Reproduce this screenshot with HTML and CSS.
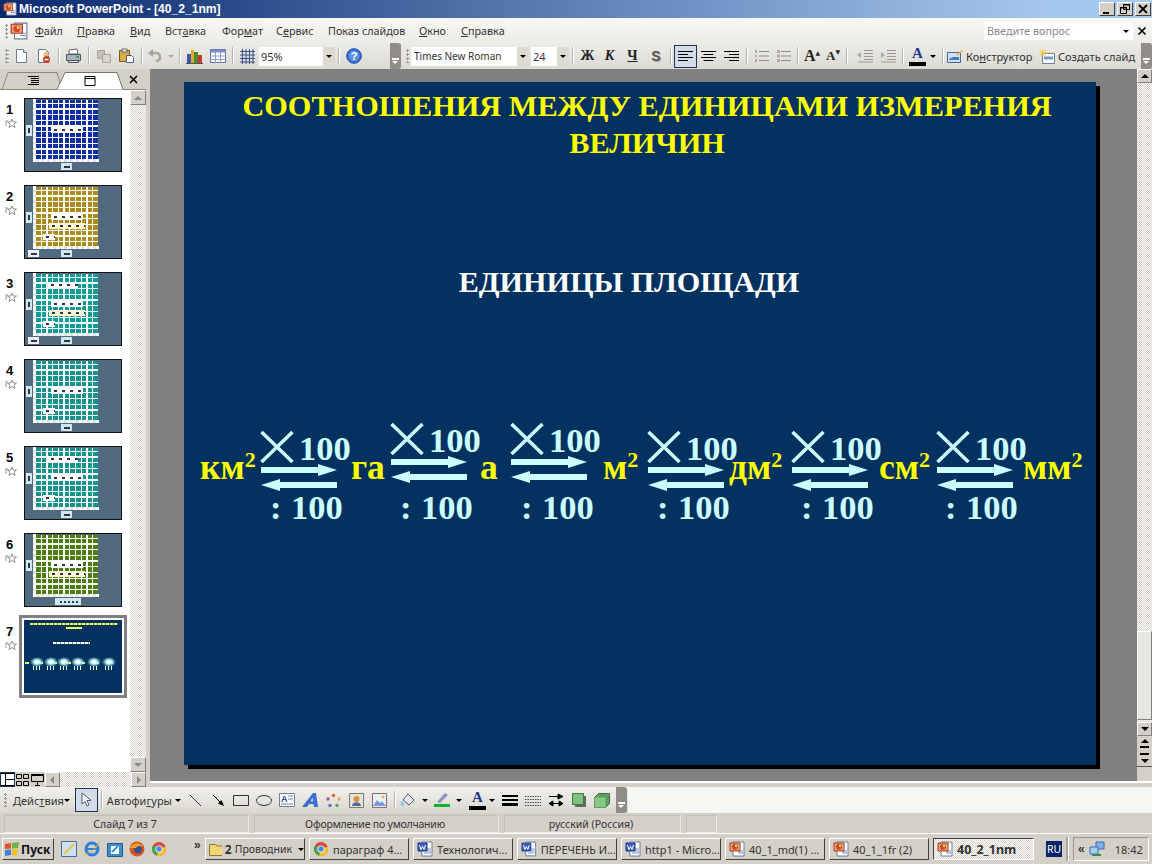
FILE: index.html
```html
<!DOCTYPE html>
<html lang="ru">
<head>
<meta charset="utf-8">
<title>Microsoft PowerPoint - [40_2_1nm]</title>
<link rel="stylesheet" href="styles.css">
</head>
<body>
<svg class="defs" width="0" height="0">
  <defs>
    <symbol id="ppt" viewBox="0 0 16 16">
      <path d="M4 1h11v14H4z" fill="#fff" stroke="#6a7fa0"/>
      <path d="M9 10h5M9 12h5" stroke="#6f86b5"/>
      <path d="M1 2h10v8H1z" fill="#e8a080" stroke="#a04020"/>
      <circle cx="6" cy="6" r="3" fill="#d84a20"/><path d="M6 6V3.5A2.5 2.5 0 0 1 8.5 6z" fill="#f5d070"/>
    </symbol>
    <symbol id="word" viewBox="0 0 16 16">
      <path d="M5 1h10v14H5z" fill="#fff" stroke="#6a7fa0"/>
      <path d="M10 8h4M10 10h4M7 12h7" stroke="#7f93bd"/>
      <path d="M1 2h9v8H1z" fill="#3b5fc0" stroke="#1e3a8a"/>
      <path d="M2.5 4l1.5 4.500 1.500-3 1.500 3 1.500-4.500" fill="none" stroke="#fff"/>
    </symbol>
    <symbol id="chrome" viewBox="0 0 16 16">
      <circle cx="8" cy="8" r="7" fill="#d9463a"/>
      <path d="M8 8L2 4.500A7 7 0 0 0 6 14.700z" fill="#3da84f"/>
      <path d="M8 8l6.500-2.500A7 7 0 0 1 6 14.700z" fill="#f3c22e"/>
      <circle cx="8" cy="8" r="3.600" fill="#fff"/><circle cx="8" cy="8" r="2.700" fill="#4a86e0"/>
    </symbol>
    <symbol id="cross" viewBox="0 0 34 32">
      <path d="M1.500 1l31 30M32.500 1l-31 30" stroke="#ccffff" stroke-width="3.500" fill="none"/>
    </symbol>
    <symbol id="arrowr" viewBox="0 0 76 12">
      <path d="M0 3h57V0l19 6-19 6V9H0z" fill="#ccffff"/>
    </symbol>
    <symbol id="arrowl" viewBox="0 0 76 12">
      <path d="M76 3H19V0L0 6l19 6V9h57z" fill="#ccffff"/>
    </symbol>
    <symbol id="star" viewBox="0 0 12 11">
      <path d="M7 1l1.300 3H11.500L9 6l1 3.500L7 7.500 4 9.500 5 6 2.500 4H5.700z" fill="#fff" stroke="#777" stroke-width=".8"/>
      <path d="M0 3h3M0 5h2M0 7h2" stroke="#777" stroke-width=".8"/>
    </symbol>
  </defs>
</svg>

<header class="titlebar">
  <svg class="ti" width="16" height="14"><use href="#ppt"/></svg>
  <span class="title-text">Microsoft PowerPoint - [40_2_1nm]</span>
  <div class="winbtns">
    <span class="winbtn"><svg width="12" height="12"><path d="M2 9h6v2H2z" fill="#000"/></svg></span>
    <span class="winbtn"><svg width="12" height="12"><path d="M4.500 1.500h6v5h-6zM1.500 4.500h6v6h-6z" fill="#d4d0c8" stroke="#000"/><path d="M4 1h7v1.500H4zM1 4h7v1.500H1z"/></svg></span>
    <span class="winbtn"><svg width="12" height="12"><path d="M2 2l8 8M10 2l-8 8" stroke="#000" stroke-width="1.800"/></svg></span>
  </div>
</header>

<nav class="menubar">
  <span class="grip"></span>
  <svg class="menu-ico" width="18" height="18"><use href="#ppt"/></svg>
  <span class="mi m1"><u>Ф</u>айл</span>
  <span class="mi m2"><u>П</u>равка</span>
  <span class="mi m3"><u>В</u>ид</span>
  <span class="mi m4">Вст<u>а</u>вка</span>
  <span class="mi m5">Фор<u>м</u>ат</span>
  <span class="mi m6">С<u>е</u>рвис</span>
  <span class="mi m7">Показ слайдов</span>
  <span class="mi m8"><u>О</u>кно</span>
  <span class="mi m9"><u>С</u>правка</span>
  <span class="helpbox">Введите вопрос<i class="drop"></i></span>
  <svg class="helpx" width="10" height="10"><path d="M1.500 1.500l7 7M8.500 1.500l-7 7" stroke="#000" stroke-width="1.600"/></svg>
</nav>

<div class="toolbar">
  <span class="grip"></span>
  <span class="tb"><svg width="16" height="16"><path d="M3.500 1.500h7l3 3v10h-10z" fill="#fff" stroke="#6b7a90"/><path d="M10.500 1.500v3h3" fill="#dde" stroke="#6b7a90"/></svg></span>
  <span class="tb"><svg width="16" height="16"><path d="M2.500 1.500h7l3 3v10h-10z" fill="#fff" stroke="#6b7a90"/><path d="M8 5c1-2 3-2 4 0l1 3H7z" fill="#e5c07a"/><circle cx="10.500" cy="11.500" r="3.500" fill="#c83a28"/><path d="M8.500 11.500h4" stroke="#fff" stroke-width="1.500"/></svg></span>
  <span class="sep"></span>
  <span class="tb"><svg width="17" height="16"><path d="M4 2l8-1 1 5H4z" fill="#fff" stroke="#667"/><path d="M1.500 6.500h14v6h-14z" fill="#a9b2bd" stroke="#4a5360"/><path d="M3.500 12.500h10v2h-10z" fill="#dfe3e8" stroke="#4a5360"/><path d="M11 9h3" stroke="#3da84f" stroke-width="2"/></svg></span>
  <span class="sep"></span>
  <span class="tb"><svg width="16" height="16"><path d="M1.500 2.500h7v8h-7z" fill="#c4c1b8" stroke="#a8a59c"/><path d="M6.500 6.500h8v8h-8z" fill="#d9d6cd" stroke="#a8a59c"/></svg></span>
  <span class="tb"><svg width="17" height="16"><path d="M1.500 2.500h10v11h-10z" fill="#d9a94a" stroke="#7a5a20"/><path d="M4 1h5v3H4z" fill="#e8e8ee" stroke="#666"/><path d="M8.500 7.500h5l2 2v5h-7z" fill="#fff" stroke="#4a5b80"/></svg></span>
  <span class="sep"></span>
  <span class="tb tb-n"><svg width="16" height="16"><path d="M4 5h5a4 4 0 0 1 2 7.500l-2 1" fill="none" stroke="#a8a59c" stroke-width="2.400"/><path d="M1 5l5-4v8z" fill="#a8a59c"/></svg></span>
  <i class="mini mini-dim"></i>
  <span class="sep"></span>
  <span class="tb"><svg width="17" height="17"><path d="M1 6h4v9H1z" fill="#3d55b8"/><path d="M5 2h3v13H5z" fill="#d8b020"/><path d="M8 4h4v11H8z" fill="#4a8a3a"/><path d="M12 7h4v8h-4z" fill="#c83a28"/><path d="M0 15.500h17" stroke="#555"/></svg></span>
  <span class="tb"><svg width="16" height="14"><path d="M.5 .5h15v13H.5z" fill="#fff" stroke="#5a6fa5"/><path d="M.5 .5h15v3H.5z" fill="#7a8fc5"/><path d="M5.500 3v11M10.500 3v11M0 7h16M0 10.500h16" stroke="#8a9dc8"/></svg></span>
  <span class="sep"></span>
  <span class="tb"><svg width="15" height="15"><path d="M2.500 0v15M6 0v15M9.500 0v15M13 0v15M0 2.500h15M0 6h15M0 9.500h15M0 13h15" stroke="#34508f"/></svg></span>
  <span class="combo c-zoom">95%<i class="combo-btn"></i></span>
  <span class="sep"></span>
  <span class="tb"><svg width="16" height="16"><circle cx="8" cy="8" r="7.300" fill="#3a6fd8" stroke="#1f4aa0"/><circle cx="8" cy="8" r="5.200" fill="#5b8fec"/><text class="q" x="8" y="12" text-anchor="middle">?</text></svg></span>
  <span class="chev chev-a"><i class="chev-dd"></i></span>

  <span class="grip grip-b"></span>
  <span class="combo c-font">Times New Roman<i class="combo-btn"></i></span>
  <span class="combo c-size">24<i class="combo-btn"></i></span>
  <span class="sep"></span>
  <span class="fmt f-b">Ж</span>
  <span class="fmt f-i">К</span>
  <span class="fmt f-u">Ч</span>
  <span class="fmt f-s">S</span>
  <span class="sep"></span>
  <span class="al active"><svg width="15" height="13"><path d="M0 1.500h15M0 4.500h10M0 7.500h15M0 10.500h10" stroke="#000"/></svg></span>
  <span class="al"><svg width="15" height="13"><path d="M0 1.500h15M2.500 4.500h10M0 7.500h15M2.500 10.500h10" stroke="#000"/></svg></span>
  <span class="al"><svg width="15" height="13"><path d="M0 1.500h15M5 4.500h10M0 7.500h15M5 10.500h10" stroke="#000"/></svg></span>
  <span class="sep"></span>
  <span class="tb tb-22"><svg width="15" height="14"><path d="M5 2.500h10M5 7h10M5 11.500h10" stroke="#8f8d86"/><path d="M1 1h2v3H1zM1 6h2v2H1zM1 10h2v3H1z" fill="#aeaca4"/></svg></span>
  <span class="tb tb-22"><svg width="15" height="14"><path d="M5 2.500h10M5 7h10M5 11.500h10" stroke="#8f8d86"/><path d="M1 1h3v3H1zM1 5.500h3v3H1zM1 10h3v3H1z" fill="#aeaca4"/></svg></span>
  <span class="sep"></span>
  <span class="fmt f-up">A<sup>▲</sup></span>
  <span class="fmt f-dn">A<sup>▼</sup></span>
  <span class="sep"></span>
  <span class="tb tb-ind"><svg width="16" height="14"><path d="M7 1.500h9M7 4.500h9M7 7.500h9M7 10.500h9M1 13h15" stroke="#9a988f"/><path d="M0 6l4-3v6z" fill="#9fb09f"/></svg></span>
  <span class="tb"><svg width="16" height="14"><path d="M7 1.500h9M7 4.500h9M7 7.500h9M7 10.500h9M1 13h15" stroke="#9a988f"/><path d="M5 6L1 3v6z" fill="#9fb09f"/></svg></span>
  <span class="sep"></span>
  <span class="fcolor">A</span>
  <i class="mini mini-f"></i>
  <span class="sep"></span>
  <svg class="dsg" width="17" height="14"><path d="M.5 3.500h13v10H.5z" fill="#cfe0f5" stroke="#4a6a9a"/><path d="M2 10l4-2h6v3H2z" fill="#4a78c0"/><path d="M9 6l6-5 1 1-6 5z" fill="#e8b040"/></svg>
  <span class="txt-btn t-dsg">Ко<u>н</u>структор</span>
  <svg class="dsg dsg2" width="16" height="15"><path d="M3.500 4.500h12v10h-12z" fill="#fff" stroke="#6a7fa0"/><path d="M5 9h9" stroke="#7a94c0" stroke-width="3"/><path d="M4 0v7M0 4h8M1 1l6 6M7 1L1 7" stroke="#f0c830"/></svg>
  <span class="txt-btn t-new">Создать слай<u>д</u></span>
  <span class="chev chev-b"><i class="chev-dd"></i></span>
</div>

<main class="workspace">
  <aside class="panel">
    <div class="tabs">
      <svg class="tab-art" width="146" height="21">
        <path d="M2 20.500L8 3.500h49l5 17z" fill="#d4d0c8" stroke="#8a887f"/>
        <path d="M57 20.500L65 3.500h52l6 17" fill="#fff" stroke="#77756d"/>
        <path d="M28 7.500h11M31 9.500h8M31 11.500h8M31 13.500h8M28 15.500h11" stroke="#000"/>
        <path d="M85 7.500h10v9H85z" fill="#fff" stroke="#000"/><path d="M85 9.500h10" stroke="#000"/>
        <path d="M130 7l7 7M137 7l-7 7" stroke="#000" stroke-width="1.500"/>
      </svg>
    </div>
    <div class="panel-body">
      <div class="thumbs">
        <div class="slide-item"><span class="num">1<svg class="star" width="12" height="11"><use href="#star"/></svg></span>
          <div class="thumb"><div class="grid g-blue"><b class="lab l-a"></b></div><b class="side"></b><b class="bot"></b></div></div>
        <div class="slide-item"><span class="num">2<svg class="star" width="12" height="11"><use href="#star"/></svg></span>
          <div class="thumb"><div class="grid g-gold"><b class="lab l-a"></b><b class="lab l-b"></b><b class="lab l-c"></b></div><b class="side"></b><b class="bot"></b><b class="bot2"></b></div></div>
        <div class="slide-item"><span class="num">3<svg class="star" width="12" height="11"><use href="#star"/></svg></span>
          <div class="thumb"><div class="grid g-teal"><b class="lab l-t1"></b><b class="lab l-a"></b><b class="lab l-b"></b><b class="lab l-c"></b></div><b class="side"></b><b class="bot"></b><b class="bot2"></b></div></div>
        <div class="slide-item"><span class="num">4<svg class="star" width="12" height="11"><use href="#star"/></svg></span>
          <div class="thumb"><div class="grid g-teal2"><b class="lab l-a"></b><b class="lab l-c"></b></div><b class="side"></b><b class="bot"></b></div></div>
        <div class="slide-item"><span class="num">5<svg class="star" width="12" height="11"><use href="#star"/></svg></span>
          <div class="thumb"><div class="grid g-teal2"><b class="lab l-t1"></b><b class="lab l-a"></b><b class="lab l-c"></b></div><b class="side"></b><b class="bot"></b></div></div>
        <div class="slide-item"><span class="num">6<svg class="star" width="12" height="11"><use href="#star"/></svg></span>
          <div class="thumb"><div class="grid g-green"><b class="lab l-a"></b><b class="lab l-b"></b></div><b class="side"></b><b class="bot bot-w"></b></div></div>
        <div class="slide-item current"><span class="num">7<svg class="star" width="12" height="11"><use href="#star"/></svg></span>
          <div class="thumb thumb-sel">
            <b class="t7 t7a"></b><b class="t7 t7b"></b><b class="t7 t7c"></b><b class="t7 t7d"></b>
            <b class="t7e te1"></b><b class="t7e te2"></b><b class="t7e te3"></b><b class="t7e te4"></b><b class="t7e te5"></b><b class="t7e te6"></b>
          </div></div>
      </div>
      <div class="vscroll vs-left">
        <span class="sb-btn"><i class="tri up dim-tri"></i></span>
        <span class="sb-track"></span>
        <span class="sb-btn"><i class="tri dn dim-tri"></i></span>
      </div>
    </div>
    <div class="viewbar">
      <span class="vb on"><svg width="15" height="13"><path d="M.5 .5h14v12H.5zM5.500 .5v12M5.500 6.500h9" fill="#fff" stroke="#000"/></svg></span>
      <span class="vb"><svg width="13" height="12"><path d="M.5 .5h5v4h-5zM7.500 .5h5v4h-5zM.5 7.500h5v4h-5zM7.500 7.500h5v4h-5z" fill="none" stroke="#000"/></svg></span>
      <span class="vb"><svg width="13" height="12"><path d="M.5 1.500h12v6H.5zM0 .5h13M6.500 8v3M4 11.500h5" fill="none" stroke="#000"/></svg></span>
      <span class="hb"><i class="tri lf dim-tri"></i></span>
      <span class="h-track"></span>
      <span class="hb"><i class="tri rt dim-tri"></i></span>
    </div>
  </aside>

  <section class="stage">
    <div class="canvas">
      <article class="slide">
        <h1 class="s-title">СООТНОШЕНИЯ МЕЖДУ ЕДИНИЦАМИ ИЗМЕРЕНИЯ<br>ВЕЛИЧИН</h1>
        <h2 class="s-sub">ЕДИНИЦЫ ПЛОЩАДИ</h2>

        <span class="unit u1">км<sup>2</sup></span>
        <span class="unit u2">га</span>
        <span class="unit u3">а</span>
        <span class="unit u4">м<sup>2</sup></span>
        <span class="unit u5">дм<sup>2</sup></span>
        <span class="unit u6">см<sup>2</sup></span>
        <span class="unit u7">мм<sup>2</sup></span>

        <div class="conv c1"><svg class="x" width="34" height="32"><use href="#cross"/></svg><span class="n">100</span><svg class="ar" width="76" height="12"><use href="#arrowr"/></svg><svg class="al2" width="76" height="12"><use href="#arrowl"/></svg></div>
        <div class="conv c2"><svg class="x" width="34" height="32"><use href="#cross"/></svg><span class="n">100</span><svg class="ar" width="76" height="12"><use href="#arrowr"/></svg><svg class="al2" width="76" height="12"><use href="#arrowl"/></svg></div>
        <div class="conv c3"><svg class="x" width="34" height="32"><use href="#cross"/></svg><span class="n">100</span><svg class="ar" width="76" height="12"><use href="#arrowr"/></svg><svg class="al2" width="76" height="12"><use href="#arrowl"/></svg></div>
        <div class="conv c4"><svg class="x" width="34" height="32"><use href="#cross"/></svg><span class="n">100</span><svg class="ar" width="76" height="12"><use href="#arrowr"/></svg><svg class="al2" width="76" height="12"><use href="#arrowl"/></svg></div>
        <div class="conv c5"><svg class="x" width="34" height="32"><use href="#cross"/></svg><span class="n">100</span><svg class="ar" width="76" height="12"><use href="#arrowr"/></svg><svg class="al2" width="76" height="12"><use href="#arrowl"/></svg></div>
        <div class="conv c6"><svg class="x" width="34" height="32"><use href="#cross"/></svg><span class="n">100</span><svg class="ar" width="76" height="12"><use href="#arrowr"/></svg><svg class="al2" width="76" height="12"><use href="#arrowl"/></svg></div>

        <span class="div d1">: 100</span>
        <span class="div d2">: 100</span>
        <span class="div d3">: 100</span>
        <span class="div d4">: 100</span>
        <span class="div d5">: 100</span>
        <span class="div d6">: 100</span>
      </article>
    </div>
    <div class="vscroll vs-main">
      <span class="sb-btn"><i class="tri up"></i></span>
      <span class="sb-track"><span class="sb-thumb"></span></span>
      <span class="sb-btn"><i class="tri dn"></i></span>
      <span class="pg"><i class="tri up"></i><i class="bar"></i></span>
      <span class="pg"><i class="bar"></i><i class="tri dn"></i></span>
      <span class="sb-rest"></span>
    </div>
  </section>
</main>

<div class="drawbar">
  <div class="draw-tools">
    <span class="grip"></span>
    <span class="dtxt d-act">Дейс<u>т</u>вия</span><i class="mini mini-act"></i>
    <span class="sel-btn"><svg width="12" height="16"><path d="M2 1v11l3-2.500 2 4.500 2-1-2-4.500h4z" fill="#fff" stroke="#4a5a70"/></svg></span>
    <span class="sep"></span>
    <span class="dtxt d-auto">Автофи<u>г</u>уры</span><i class="mini mini-auto"></i>
    <span class="tb"><svg width="13" height="13"><path d="M1 1l11 11" stroke="#333"/></svg></span>
    <span class="tb"><svg width="13" height="13"><path d="M1 1l8 8" stroke="#000"/><path d="M12 12L6 9.500 9.500 6z"/></svg></span>
    <span class="tb"><svg width="17" height="13"><path d="M.5 1.500h15v10H.5z" fill="none" stroke="#333"/></svg></span>
    <span class="tb"><svg width="17" height="13"><ellipse cx="8" cy="6.500" rx="7.500" ry="5" fill="none" stroke="#333"/></svg></span>
    <span class="tb"><svg width="16" height="14"><path d="M.5 .5h15v13H.5z" fill="#fff" stroke="#6a7fa0"/><text class="a-t" x="2" y="9">A</text><path d="M9 3h5M9 6h5M2 11h12" stroke="#6a7fa0"/></svg></span>
    <span class="tb"><svg width="17" height="16"><path d="M0 15L11 1h3l2 14h-4l-.5-3H7l-2 3z" fill="#3c6fd0"/><path d="M8.500 9.500h2.500l-.5-4z" fill="#cfe0f5"/></svg></span>
    <span class="tb"><svg width="15" height="15"><circle cx="7.500" cy="2.500" r="1.700" fill="#d86a40"/><circle cx="13" cy="6" r="1.700" fill="#d8b040"/><circle cx="11" cy="12.500" r="1.700" fill="#50a060"/><circle cx="4" cy="12.500" r="1.700" fill="#4a78c0"/><circle cx="2" cy="6" r="1.700" fill="#a050a0"/></svg></span>
    <span class="tb"><svg width="15" height="15"><path d="M.5 .5h14v14H.5z" fill="#e8e4d4" stroke="#7a7a7a"/><circle cx="7.500" cy="6" r="3" fill="#d8904a"/><path d="M3 13c0-5 9-5 9 0z" fill="#4a6aa0"/></svg></span>
    <span class="tb"><svg width="15" height="15"><path d="M.5 .5h14v14H.5z" fill="#e8f0fa" stroke="#8a6a6a"/><path d="M1 13l4-6 3 3 2-2 4 5z" fill="#7a9ad0"/><circle cx="11" cy="4" r="1.500" fill="#f0b040"/></svg></span>
    <span class="sep"></span>
    <span class="tb tb-n"><svg width="16" height="16"><path d="M3 8l5-6 6 6-5 5z" fill="#e8e8f2" stroke="#555"/><path d="M1 9c-1 3 0 5 2 5s2-3-2-5" fill="#7fc8f0"/></svg></span><i class="mini"></i>
    <span class="tb tb-n"><svg width="16" height="16"><path d="M3 10l8-9 3 2-8 8z" fill="#8a90c8"/><path d="M0 12h16v3H0z" fill="#16b02c"/></svg></span><i class="mini"></i>
    <span class="fcolor">A</span><i class="mini"></i>
    <span class="tb"><svg width="16" height="11"><path d="M0 1h16M0 5h16" stroke="#000" stroke-width="2"/><path d="M0 9.500h16" stroke="#000" stroke-width="3"/></svg></span>
    <span class="tb"><svg width="16" height="11"><path d="M0 1.500h16M0 4.500h16M0 7.500h16M0 10.500h16" stroke="#444" stroke-dasharray="1.500 1"/></svg></span>
    <span class="tb"><svg width="16" height="14"><path d="M1 3.500h12M15 3.500L10 1v5zM1 10.500h14M1 10.500L5 8v5zM15 10.500L11 8v5z" stroke="#000"/></svg></span>
    <span class="tb"><svg width="14" height="14"><path d="M3 3h11v11H3z" fill="#666"/><path d="M.5 .5h11v11H.5z" fill="#7cc27c" stroke="#3a7a3a"/></svg></span>
    <span class="tb"><svg width="16" height="15"><path d="M.5 4.500l4-4h11v10l-4 4H.5z" fill="#5aa05a" stroke="#4a6a4a"/><path d="M.5 4.500h11v10H.5z" fill="#84c984"/></svg></span>
    <span class="chev chev-c"><i class="chev-dd"></i></span>
  </div>
</div>

<footer class="statusbar">
  <span class="st st1">Слайд 7 из 7</span>
  <span class="st st2">Оформление по умолчанию</span>
  <span class="st st3">русский (Россия)</span>
  <span class="st st4"></span>
</footer>

<div class="taskbar">
  <button class="start"><svg width="16" height="14"><path d="M1 2l6-1v5.500L1 7z" fill="#e0502a"/><path d="M8 1l7-1-1 6-6 .5z" fill="#6cb33f"/><path d="M1 8l6-.5V13l-6 1z" fill="#3f7fd8"/><path d="M8 7.500l6-.5-1 6-5 .5z" fill="#f2c21f"/></svg>Пуск</button>
  <div class="ql">
    <svg width="16" height="16"><path d="M.5 .5h15v15H.5z" fill="#cfe0f5" stroke="#4a6a9a"/><path d="M3 13L13 3" stroke="#e8c040" stroke-width="2"/></svg>
    <svg width="18" height="18"><circle cx="9" cy="9" r="6" fill="none" stroke="#2a80d8" stroke-width="3"/><path d="M3 9h12" stroke="#2a80d8" stroke-width="2"/><path d="M1 15C6 14 14 8 17 1" stroke="#e8b040" fill="none"/></svg>
    <svg width="16" height="16"><path d="M.5 2.500h15v13H.5z" fill="#3f8fd0" stroke="#1f5a90"/><path d="M4 5h8v8H4z" fill="#fff"/><path d="M5 11l6-6" stroke="#3f8fd0" stroke-width="2"/></svg>
    <svg width="16" height="16"><circle cx="8" cy="8" r="7.500" fill="#d8551f"/><circle cx="9" cy="8.500" r="4" fill="#33508f"/><path d="M1 7c3-6 11-6 13-1-3-2-6-1-7 1z" fill="#f0a030"/></svg>
    <svg width="16" height="16"><use href="#chrome"/></svg>
  </div>
  <span class="more">»</span>
  <div class="tasks">
    <span class="task task-f"><svg width="18" height="14"><path d="M.5 2.500h6l1.500 1.500h9.500v9.500H.5z" fill="#f2d675" stroke="#8a7a30"/></svg><b class="cnt">2</b> Проводник<i class="mini mini-k"></i></span>
    <span class="task"><svg width="16" height="16"><use href="#chrome"/></svg>параграф 4...</span>
    <span class="task"><svg width="16" height="16"><use href="#word"/></svg>Технологич...</span>
    <span class="task"><svg width="16" height="16"><use href="#word"/></svg>ПЕРЕЧЕНЬ И...</span>
    <span class="task"><svg width="16" height="16"><use href="#word"/></svg>http1 - Micro...</span>
    <span class="task"><svg width="16" height="16"><use href="#ppt"/></svg>40_1_md(1) ...</span>
    <span class="task"><svg width="16" height="16"><use href="#ppt"/></svg>40_1_1fr (2)</span>
    <span class="task task-active"><svg width="16" height="16"><use href="#ppt"/></svg>40_2_1nm</span>
  </div>
  <span class="lang">RU</span>
  <span class="tray-sep"></span>
  <div class="tray">
    <span class="tray-ch">«</span>
    <svg width="16" height="16"><path d="M7 1h8v7H7z" fill="#7fb0e8" stroke="#3a6fb0"/><path d="M1 6h8v7H1z" fill="#a8cdf0" stroke="#3a6fb0"/><path d="M3 14h9" stroke="#3a8f3a" stroke-width="2"/></svg>
    <span class="clock">18:42</span>
  </div>
</div>
</body>
</html>
```
FILE: styles.css
```css
* { box-sizing: border-box; }
html, body { margin: 0; padding: 0; }
body {
  width: 1152px; height: 864px; overflow: hidden;
  display: flex; flex-direction: column;
  font-family: "Noto Sans", "Open Sans", sans-serif; font-size: 11px; color: #333;
  background: #d4d0c8;
}
i, b { display: block; font-style: normal; }
.defs { position: absolute; }

/* title bar */
.titlebar {
  height: 18px; flex: none; display: flex; align-items: center; padding: 0 1px 0 2px;
  background: linear-gradient(90deg, #0c2a6e 0%, #2b4a8a 20%, #5f80b5 50%, #a4c6ec 90%, #a6caf0 100%);
}
.ti { margin-right: 1px; flex: none; }
.title-text { color: #fff; font-family: "Liberation Sans", sans-serif; font-weight: bold; font-size: 12.100px; }
.winbtns { margin-left: auto; display: flex; gap: 2px; }
.winbtn {
  width: 16px; height: 14px; display: flex; align-items: center; justify-content: center;
  background: #d4d0c8; border: 1px solid; border-color: #fff #404040 #404040 #fff;
}

/* shared bits */
.grip {
  width: 3px; height: 14px; flex: none; margin: 0 3px 0 4px;
  background: radial-gradient(circle at 1.500px 1.500px, #9a978e 1.200px, transparent 1.300px) 0 0 / 3px 4px;
}
.sep { width: 1px; height: 18px; flex: none; margin: 0 3px; background: #b8b5ab; box-shadow: 1px 0 0 #fff; }
.tb { width: 23px; height: 23px; flex: none; display: flex; align-items: center; justify-content: center; }
.tb-n { width: 20px; }
.tb-22 { width: 22px; }
.tb-ind { margin-left: 3px; }
.mini { width: 0; height: 0; flex: none; margin: 0 4px; border: 3px solid transparent; border-top: 3px solid #000; border-bottom: 0; }
.mini-dim { margin: 0 2px 0 3px; border-top-color: #a8a59c; }
.mini-f { margin: 0 3px 0 4px; }
.mini-k { margin: 0 0 0 3px; }

/* menu */
.menubar {
  height: 25px; flex: none; display: flex; align-items: center; position: relative; font-size: 10.800px;
  background: linear-gradient(180deg, #f8f7f4 0%, #ecebe6 100%);
}
.menubar .grip { margin: 0 1px 0 5px; }
.menu-ico { flex: none; margin-right: 7px; margin-left: 1px; }
.mi { flex: none; }
.m1 { width: 42px; } .m2 { width: 53px; } .m3 { width: 35px; } .m4 { width: 57px; }
.m5 { width: 54px; } .m6 { width: 52px; } .m7 { width: 91px; } .m8 { width: 42px; }
.m9 { width: 50px; }
.helpbox {
  margin-left: auto; width: 149px; height: 18px; flex: none; background: #fff; padding-left: 3px;
  display: flex; align-items: center; color: #8a8a8a; position: relative;
}
.drop { position: absolute; right: 4px; top: 8px; border: 3px solid transparent; border-top-color: #000; border-bottom: 0; }
.helpx { margin: 0 5px 0 4px; flex: none; }

/* toolbar */
.toolbar {
  height: 26px; flex: none; display: flex; align-items: center;
  background: linear-gradient(180deg, #ecebe6 0%, #dcdad3 100%);
}
.toolbar > .grip:first-child { margin: 0 0 0 5px; width: 4px; }
.combo {
  height: 19px; flex: none; background: #fff; display: flex; align-items: center; padding-left: 2px; position: relative;
}
.combo-btn {
  position: absolute; right: 0; top: 0; width: 12px; height: 19px; background: #dcdad3;
}
.combo-btn::after {
  content: ""; position: absolute; left: 3px; top: 8px; border: 3px solid transparent; border-top-color: #000; border-bottom: 0;
}
.c-zoom { width: 76px; }
.c-font { width: 118px; margin-right: 2px; padding-left: 3px; font-size: 10px; }
.c-size { width: 38px; }
.q { font: bold 11px "Liberation Sans", sans-serif; fill: #fff; }
.chev {
  flex: none; width: 11px; height: 26px; background: #8f8d86; position: relative; border-radius: 0 3px 3px 0;
}
.chev-dd { position: absolute; left: 2px; bottom: 5px; width: 7px; height: 6px; border-top: 2px solid #fff; }
.chev-dd::after { content: ""; position: absolute; left: 0; top: 1px; border: 3.500px solid transparent; border-top-color: #fff; border-bottom: 0; }
.chev-a { margin: 0 3px 0 25px; }
.grip-b { margin: 0 2px 0 2px; }
.fmt { flex: none; font-family: "Liberation Serif", serif; font-weight: bold; font-size: 14px; color: #222; text-align: center; }
.f-b { width: 23px; }
.f-i { width: 21px; font-style: italic; }
.f-u { width: 25px; text-decoration: underline; }
.f-s { width: 22px; font-family: "Liberation Sans", sans-serif; color: #555; text-shadow: 1px 1px 0 #aaa; }
.f-up { width: 22px; font-size: 16px; }
.f-dn { width: 20px; font-size: 13px; }
.fmt sup { font-size: 6px; vertical-align: 6px; line-height: 0; font-family: "DejaVu Sans", sans-serif; }
.al { width: 23px; height: 23px; flex: none; display: flex; align-items: center; justify-content: center; }
.al.active { background: #d3dbe8; border: 1px solid #1c3058; }
.fcolor {
  flex: none; width: 17px; margin-left: 3px; height: 20px; font: bold 15px/15px "Liberation Serif", serif; color: #1f3a8a;
  text-align: center; border-bottom: 4px solid #000;
}
.dsg { flex: none; margin: 0 2px 0 1px; }
.dsg2 { margin: 0 3px 0 7px; }
.txt-btn { flex: none; }
.t-dsg { width: 66px; }
.chev-b { margin-left: auto; }

/* workspace */
.workspace { height: 718px; flex: none; display: flex; background: #d4d0c8; }
.panel { width: 150px; flex: none; display: flex; flex-direction: column; background: #fff; border-right: 4px solid #d4d0c8; }
.tabs { height: 21px; flex: none; background: #d4d0c8; border-bottom: 1px solid #8a887f; }
.tab-art { display: block; }
.panel-body { flex: 1; min-height: 0; display: flex; }
.thumbs { width: 130px; flex: none; padding-top: 8px; display: flex; flex-direction: column; gap: 13px; background: #fff; }
.slide-item { height: 74px; position: relative; padding-left: 24px; flex: none; }
.num {
  position: absolute; left: 6px; top: 4px; width: 8px; font: bold 13px/16px "Liberation Sans", sans-serif; color: #000;
}
.star { position: absolute; left: -1px; top: 16px; }
.thumb { width: 98px; height: 74px; position: relative; background: #526a80; border: 1px solid #111; overflow: hidden; }
.grid { position: absolute; left: 10px; top: 1px; width: 63px; height: 61px;
  background-image: repeating-linear-gradient(90deg, #fff 0 1.300px, transparent 1.300px 5.700px), repeating-linear-gradient(0deg, #fff 0 1.300px, transparent 1.300px 5.700px);
}
.grid::before { content: ""; position: absolute; left: -2px; top: -1px; width: 3px; height: 60px; background: repeating-linear-gradient(180deg, #fff 0 3px, #e4e4e4 3px 5.700px); }
.grid::after { content: ""; position: absolute; left: -2px; bottom: -1px; width: 66px; height: 3px; background: repeating-linear-gradient(90deg, #fff 0 3px, #e4e4e4 3px 5.700px); }
.g-blue { background-color: #0d2ea5; }
.g-gold { background-color: #ad8a1c; }
.g-teal { background-color: #119c97; }
.g-teal2 { background-color: #16938f; }
.g-green { background-color: #4c7d10; }
.lab { position: absolute; height: 6px; background: repeating-linear-gradient(90deg, #fff 0 3px, #334 3px 6px, #fff 6px 8px) center / 100% 2px no-repeat, #fff; }
.l-a { left: 16px; top: 27px; width: 32px; }
.l-b { left: 14px; top: 36px; width: 36px; background: repeating-linear-gradient(90deg, #fff8d8 0 3px, #334 3px 6px, #fff8d8 6px 8px) center / 100% 2px no-repeat, #fff8d8; }
.l-c { left: 8px; top: 47px; width: 12px; }
.l-t1 { left: 13px; top: 8px; width: 30px; }
.side { position: absolute; left: 1px; top: 26px; width: 6px; height: 11px; background: linear-gradient(#334, #334) center / 2px 5px no-repeat, #cfe8ee; }
.bot { position: absolute; left: 36px; bottom: 1px; width: 11px; height: 7px; background: linear-gradient(#334, #334) center / 6px 2px no-repeat, #cfe8ee; }
.bot-w { width: 26px; left: 30px; background: repeating-linear-gradient(90deg, #cfe8ee 0 2px, #334 2px 4px) center / 20px 2px no-repeat, #cfe8ee; }
.bot2 { position: absolute; left: 3px; bottom: 1px; width: 11px; height: 7px; background: linear-gradient(#334, #334) center / 6px 2px no-repeat, #eef; }
.thumb-sel { height: 73px; background: #033160; border: none; overflow: visible; box-shadow: 0 0 0 2px #fff, 0 0 0 5px #808080; }
.t7 { position: absolute; height: 2px; }
.t7a { left: 6px; top: 3px; width: 88px; background: repeating-linear-gradient(90deg, #e8ff50 0 3px, #7a9050 3px 4px); }
.t7b { left: 42px; top: 7px; width: 16px; background: #e8ff50; }
.t7c { left: 29px; top: 22px; width: 37px; background: repeating-linear-gradient(90deg, #fff 0 3px, #7a9ab0 3px 4px); }
.t7d { left: 1px; top: 42px; width: 94px; height: 2px; background: repeating-linear-gradient(90deg, #dfff60 0 4px, #033160 4px 14px); }
.t7e { position: absolute; top: 37px; width: 14px; height: 10px; background: radial-gradient(ellipse at center, #fff 0 2px, #a8f0f0 3px, transparent 7px); }
.t7e::after { content: ""; position: absolute; left: 3px; top: 9px; width: 8px; height: 4px; background: repeating-linear-gradient(90deg, #e8ffff 0 1px, transparent 1px 3px); }
.te1 { left: 6px; } .te2 { left: 20px; } .te3 { left: 33px; } .te4 { left: 47px; } .te5 { left: 63px; } .te6 { left: 78px; }

.vscroll { display: flex; flex-direction: column; flex: none; }
.vs-left { width: 16px; }
.sb-btn { height: 15px; flex: none; width: 100%; background: #d4d0c8; border: 1px solid; border-color: #fff #808080 #808080 #fff; position: relative; }
.sb-track { flex: 1; position: relative; background: repeating-conic-gradient(#d4d0c8 0 25%, #fff 0 50%) 0 0 / 2px 2px; }
.tri { position: absolute; left: 50%; top: 50%; width: 0; height: 0; margin: -2px 0 0 -4px; border: 4px solid transparent; }
.tri.up { border-top: 0; border-bottom-color: #000; }
.tri.dn { border-bottom: 0; border-top-color: #000; }
.tri.lf { margin: -4px 0 0 -3px; border-left: 0; border-right-color: #000; }
.tri.rt { margin: -4px 0 0 -2px; border-right: 0; border-left-color: #000; }
.tri.up.dim-tri { border-bottom-color: #8a8a84; }
.tri.dn.dim-tri { border-top-color: #8a8a84; }
.tri.lf.dim-tri { border-right-color: #8a8a84; }
.tri.rt.dim-tri { border-left-color: #8a8a84; }

.viewbar { height: 15px; flex: none; display: flex; align-items: center; background: #d4d0c8; }
.vb { width: 15px; height: 15px; flex: none; display: flex; align-items: center; justify-content: center; }
.vb.on { background: #d3dbe8; outline: 1px solid #1c3058; outline-offset: -1px; }
.hb { width: 15px; height: 15px; flex: none; background: #d4d0c8; border: 1px solid; border-color: #fff #808080 #808080 #fff; position: relative; }
.h-track { flex: 1; height: 15px; background: repeating-conic-gradient(#d4d0c8 0 25%, #fff 0 50%) 0 0 / 2px 2px; }

/* stage */
.stage { flex: 1; min-width: 0; display: flex; height: 714px; border-bottom: 2px solid #fff; }
.canvas { flex: 1; min-width: 0; padding: 13px 0 0 34px; background: #808080; }
.slide {
  width: 912px; height: 683px; position: relative; background: #033160; box-shadow: 4px 4px 0 #000;
  font-family: "Liberation Serif", serif; font-weight: bold;
}
.s-title { position: absolute; left: 0; width: 926px; top: 6px; margin: 0; text-align: center; color: #ffff00; font-size: 30.300px; line-height: 37px; font-weight: bold; }
.s-sub { position: absolute; left: 0; width: 890px; top: 182px; margin: 0; text-align: center; color: #fff; font-size: 30.200px; line-height: 36px; font-weight: bold; }
.unit { position: absolute; top: 365px; color: #ffff00; font-size: 35.500px; line-height: 40px; }
.unit sup { font-size: 22px; line-height: 0; vertical-align: 12px; }
.u1 { left: 16px; } .u2 { left: 167px; } .u3 { left: 296px; } .u4 { left: 419px; }
.u5 { left: 545px; } .u6 { left: 695px; } .u7 { left: 839px; }
.conv { position: absolute; width: 100px; height: 64px; }
.c1 { left: 76px; top: 349px; }
.c2 { left: 206px; top: 341px; }
.c3 { left: 326px; top: 341px; }
.c4 { left: 463px; top: 349px; }
.c5 { left: 607px; top: 349px; }
.c6 { left: 752px; top: 349px; }
.x { position: absolute; left: 0; top: 0; }
.n { position: absolute; left: 39px; top: -2px; color: #ccffff; font-size: 34.500px; line-height: 38px; }
.ar { position: absolute; left: 1px; top: 33px; }
.al2 { position: absolute; left: 1px; top: 48px; }
.div { position: absolute; top: 406px; color: #ccffff; font-size: 34.500px; line-height: 38px; white-space: pre; word-spacing: 1px; }
.d1 { left: 86px; } .d2 { left: 216px; } .d3 { left: 337px; } .d4 { left: 473px; } .d5 { left: 617px; } .d6 { left: 761px; }

.vs-main { width: 15px; }
.vs-main .sb-btn { height: 14px; }
.vs-main .sb-track { flex: none; height: 639px; }
.sb-thumb { position: absolute; left: 0; right: 0; bottom: 2px; height: 89px; background: #e8e6e0; border: 1px solid; border-color: #fff #808080 #808080 #fff; }
.pg { height: 15px; flex: none; position: relative; background: #d4d0c8; }
.bar { position: absolute; left: 3px; right: 3px; height: 2px; background: #000; }
.pg .bar { top: 10px; }
.pg + .pg .bar { top: 2px; }
.pg .tri.up { margin-top: -5px; }
.pg .tri.dn { margin-top: 0; }
.sb-rest { flex: 1; background: #d4d0c8; border-top: 1px solid #555; }

/* drawing toolbar */
.drawbar { height: 26px; flex: none; background: #f6f6f3; }
.draw-tools { height: 26px; width: 628px; display: flex; align-items: center; background: linear-gradient(180deg, #f2f1ed 0%, #d9d7cf 100%); }
.drawbar .tb { width: 23px; }
.drawbar .tb-n { width: 21px; }
.drawbar .mini { margin: 0 4px 0 3px; }
.drawbar .mini-act { margin: 0 4px 0 0; }
.drawbar .mini-auto { margin: 0 3px 0 3px; }
.dtxt { flex: none; }
.d-act { margin-left: 3px; }
.d-auto { margin-left: 2px; }
.sel-btn { width: 23px; height: 24px; flex: none; margin-left: 1px; display: flex; align-items: center; justify-content: center; background: #d3dbe8; border: 1px solid #1c3058; }
.a-t { font: bold 9px "Liberation Sans", sans-serif; fill: #2a4a90; }
.chev-c { margin-left: 2px; }

/* status */
.statusbar { height: 21px; flex: none; display: flex; gap: 5px; padding: 2px 0 1px 4px; background: #d4d0c8; border-bottom: 1px solid #fff; font-size: 10.500px; }
.st { height: 18px; flex: none; display: flex; align-items: center; justify-content: center; padding-right: 3px; border: 1px solid; border-color: #c4c1b8 #eceae4 #eceae4 #c4c1b8; }
.st1 { width: 245px; } .st2 { width: 245px; letter-spacing: -.2px; } .st3 { width: 177px; } .st4 { width: 31px; }

/* taskbar */
.taskbar { flex: 1; display: flex; align-items: center; padding: 0 3px 0 2px; background: #d4d0c8; }
.start {
  width: 52px; height: 22px; flex: none; padding: 0 0 0 1px; display: flex; align-items: center; gap: 1px;
  font: bold 12px "Noto Sans", sans-serif; color: #111; background: #d4d0c8;
  border: 1px solid; border-color: #fff #404040 #404040 #fff;
}
.ql { display: flex; align-items: center; gap: 6px; flex: none; margin-left: 7px; width: 131px; }
.more { flex: none; width: 11px; font: bold 12px "Liberation Sans", sans-serif; margin-top: -8px; margin-left: 2px; }
.tasks { display: flex; gap: 4px; flex: none; }
.task {
  width: 100px; height: 22px; flex: none; display: flex; align-items: center; gap: 4px; padding-left: 3px;
  border: 1px solid; border-color: #fff #404040 #404040 #fff; white-space: nowrap; background: #d4d0c8;
}
.task-f { gap: 3px; font-size: 10.500px; }
.cnt { font-size: 12px; }
.task-active {
  width: 101px; font-weight: bold; font-size: 12.500px; border-color: #404040 #fff #fff #404040;
  background: repeating-conic-gradient(#d4d0c8 0 25%, #fff 0 50%) 0 0 / 2px 2px;
}
.lang { width: 16px; height: 16px; flex: none; margin-left: 12px; background: #0a246a; color: #fff; text-align: center; line-height: 16px; font-size: 10.500px; }
.tray-sep { width: 2px; height: 24px; flex: none; margin: 0 4px; background: #aaa7a0; box-shadow: 1px 0 0 #fff; }
.tray { width: 76px; height: 24px; flex: none; margin-left: 1px; display: flex; align-items: center; gap: 4px; padding-left: 4px; border: 1px solid; border-color: #9a978e #fff #fff #9a978e; }
.tray-ch { font: bold 12px "Liberation Sans", sans-serif; }
.clock { margin-left: 6px; }
```
